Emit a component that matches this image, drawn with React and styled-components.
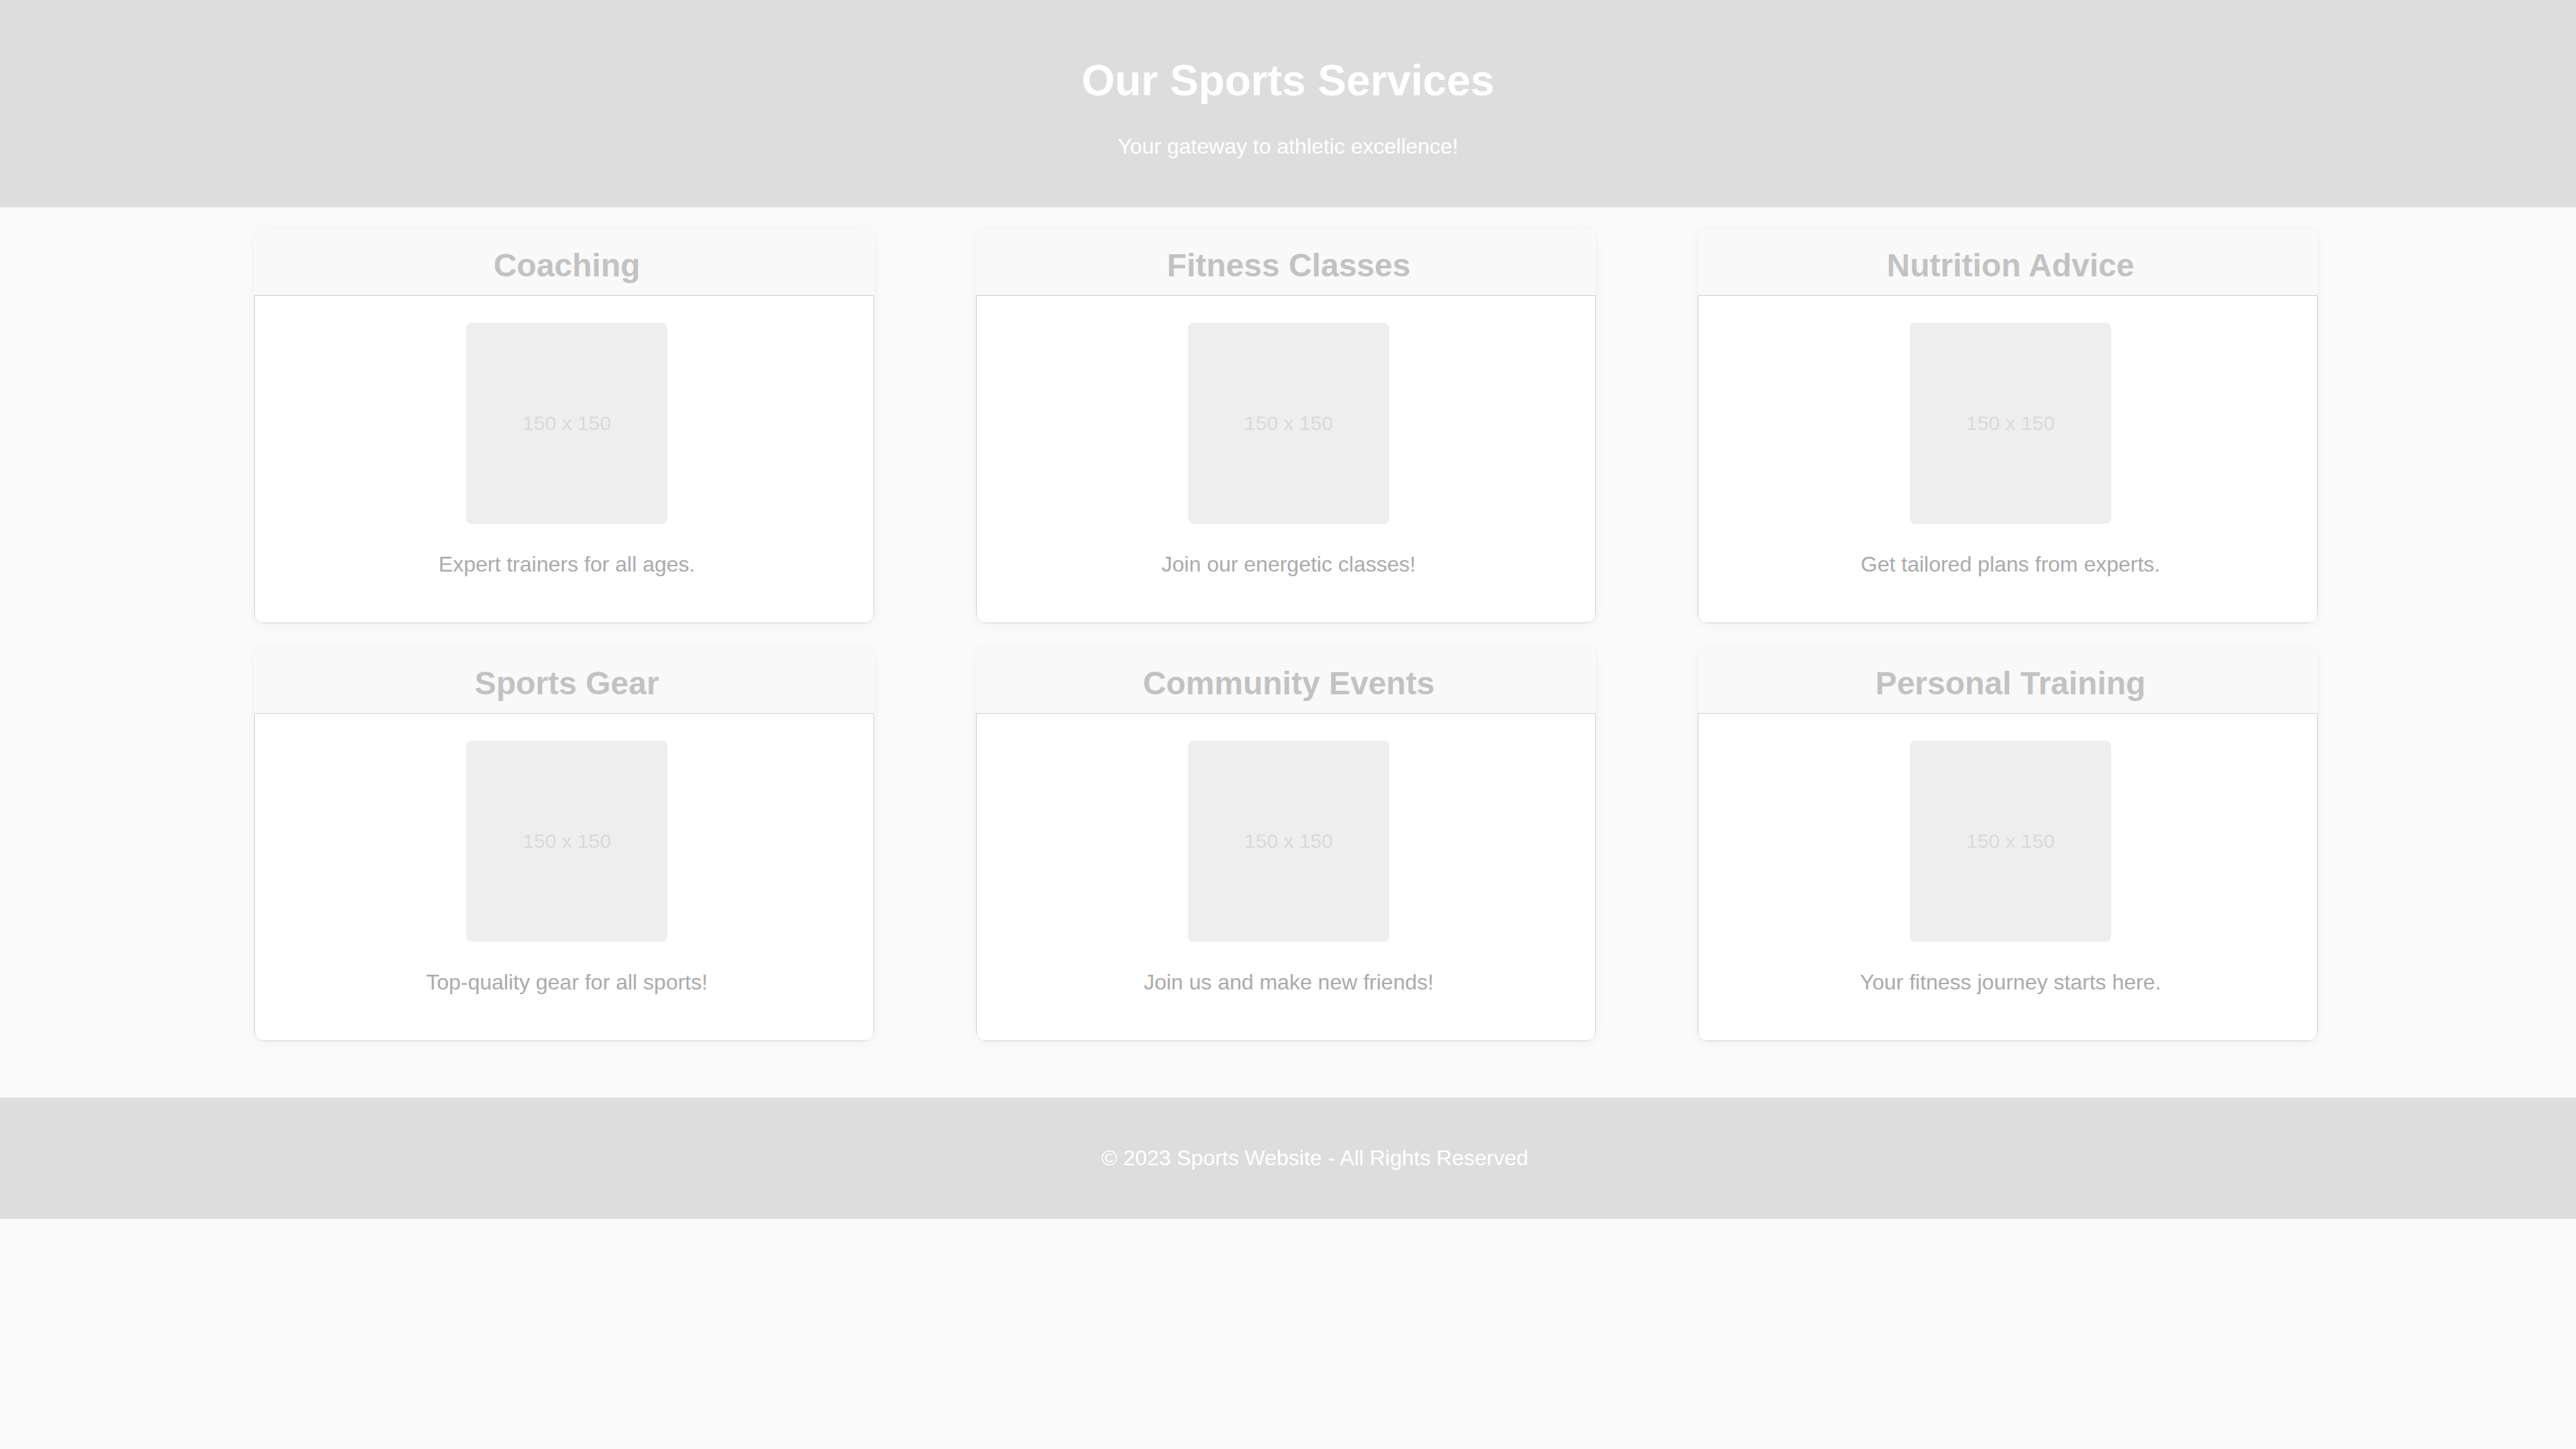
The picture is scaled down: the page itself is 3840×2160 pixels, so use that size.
import React from "react";
import styled, { createGlobalStyle } from "styled-components";

const GlobalStyle = createGlobalStyle`
  html, body {
    margin: 0;
    padding: 0;
    background: #fafafa;
    font-family: "Liberation Sans", Arial, sans-serif;
  }
`;

const Page = styled.div`
  min-height: 2160px;
  background: #fafafa;
`;

const Header = styled.header`
  background: #dddddd;
  color: #ffffff;
  text-align: center;
  padding: 40px;
`;

const Title = styled.h1`
  margin: 43px 0;
  font-size: 64px;
  font-weight: bold;
  line-height: 74px;
`;

const Subtitle = styled.p`
  margin: 32px 0;
  font-size: 32px;
  line-height: 37px;
`;

const Main = styled.main`
  width: 3076px;
  margin: 0 0 0 calc(10% - 5px);
  padding: 32px 0 84px;
  display: grid;
  grid-template-columns: repeat(3, 924px);
  justify-content: space-between;
  row-gap: 35px;
`;

const Card = styled.section`
  background: #f9f9f9;
  border-radius: 16px;
  box-shadow: 0 2px 14px rgba(0, 0, 0, 0.05);
  overflow: hidden;
`;

const CardHeader = styled.div`
  padding: 27px 12px 17px 20px;
  text-align: center;
  background: #f9f9f9;
`;

const CardTitle = styled.h2`
  margin: 0;
  font-size: 48px;
  line-height: 55px;
  font-weight: bold;
  color: #c2c2c2;
`;

const CardBody = styled.div`
  background: #ffffff;
  border: 1px solid #d0d0d0;
  border-radius: 0 0 14px 14px;
  padding: 40px 36px 40px 44px;
  text-align: center;
`;

const Placeholder = styled.div`
  width: 300px;
  height: 300px;
  margin: 0 auto 8px;
  background: #eeeeee;
  border-radius: 8px;
  display: flex;
  align-items: center;
  justify-content: center;
  color: #dadada;
  font-size: 30px;
`;

const Description = styled.p`
  margin: 42px 0 28px;
  font-size: 32px;
  line-height: 37px;
  color: #aaaaaa;
`;

const Footer = styled.footer`
  background: #dddddd;
  color: #ffffff;
  text-align: center;
  padding: 40px 40px 40px 120px;
`;

const FooterText = styled.p`
  margin: 32px 0;
  font-size: 32px;
  line-height: 37px;
`;

const services = [
  { title: "Coaching", text: "Expert trainers for all ages." },
  { title: "Fitness Classes", text: "Join our energetic classes!" },
  { title: "Nutrition Advice", text: "Get tailored plans from experts." },
  { title: "Sports Gear", text: "Top-quality gear for all sports!" },
  { title: "Community Events", text: "Join us and make new friends!" },
  { title: "Personal Training", text: "Your fitness journey starts here." },
];

export default function App() {
  return (
    <Page>
      <GlobalStyle />
      <Header>
        <Title>Our Sports Services</Title>
        <Subtitle>Your gateway to athletic excellence!</Subtitle>
      </Header>
      <Main>
        {services.map((s) => (
          <Card key={s.title}>
            <CardHeader>
              <CardTitle>{s.title}</CardTitle>
            </CardHeader>
            <CardBody>
              <Placeholder>150 x 150</Placeholder>
              <Description>{s.text}</Description>
            </CardBody>
          </Card>
        ))}
      </Main>
      <Footer>
        <FooterText>© 2023 Sports Website - All Rights Reserved</FooterText>
      </Footer>
    </Page>
  );
}
